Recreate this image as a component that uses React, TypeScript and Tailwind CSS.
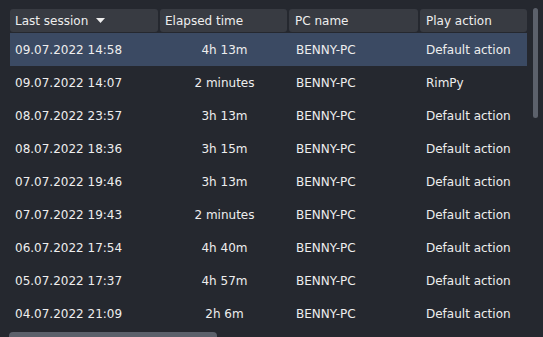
import React from "react";

const rows = [
  ["09.07.2022 14:58", "4h 13m", "BENNY-PC", "Default action"],
  ["09.07.2022 14:07", "2 minutes", "BENNY-PC", "RimPy"],
  ["08.07.2022 23:57", "3h 13m", "BENNY-PC", "Default action"],
  ["08.07.2022 18:36", "3h 15m", "BENNY-PC", "Default action"],
  ["07.07.2022 19:46", "3h 13m", "BENNY-PC", "Default action"],
  ["07.07.2022 19:43", "2 minutes", "BENNY-PC", "Default action"],
  ["06.07.2022 17:54", "4h 40m", "BENNY-PC", "Default action"],
  ["05.07.2022 17:37", "4h 57m", "BENNY-PC", "Default action"],
  ["04.07.2022 21:09", "2h 6m", "BENNY-PC", "Default action"],
];

export default function App() {
  return (
    <div
      className="relative w-[543px] h-[337px] overflow-hidden bg-[#25282f] text-[12px] text-[#eeeeee]"
      style={{ fontFamily: '"DejaVu Sans", sans-serif' }}
    >
      <div className="pt-[9px] pl-[10px] w-[527px]">
        <div className="flex gap-[2px] h-[23px]">
          <div className="w-[148px] rounded-[3px] bg-[#383b42] flex items-center pl-[5px]">
            <span>Last session</span>
            <svg width="9" height="5" viewBox="0 0 9 5" className="ml-[8px]">
              <path d="M0 0 L9 0 L4.5 5 Z" fill="#eeeeee" />
            </svg>
          </div>
          <div className="w-[127px] rounded-[3px] bg-[#383b42] flex items-center pl-[5px]">Elapsed time</div>
          <div className="w-[129px] rounded-[3px] bg-[#383b42] flex items-center pl-[6px]">PC name</div>
          <div className="flex-1 rounded-[3px] bg-[#383b42] flex items-center pl-[6px]">Play action</div>
        </div>
        <div className="mt-[1px]">
          {rows.map((r, i) => (
            <div
              key={i}
              className={`flex h-[33px] items-center ${i === 0 ? "bg-[#3b4a63]" : ""}`}
            >
              <div className="w-[150px] pl-[5px]">{r[0]}</div>
              <div className="w-[129px] text-center">{r[1]}</div>
              <div className="w-[131px] pl-[7px]">{r[2]}</div>
              <div className="flex-1 pl-[6px] whitespace-nowrap">{r[3]}</div>
            </div>
          ))}
        </div>
      </div>
      <div className="absolute left-[533px] top-[8px] w-[5px] h-[110px] rounded-full bg-[#5c616b]" />
      <div className="absolute left-[9px] top-[332px] w-[208px] h-[8px] rounded-full bg-[#5c616b]" />
    </div>
  );
}
